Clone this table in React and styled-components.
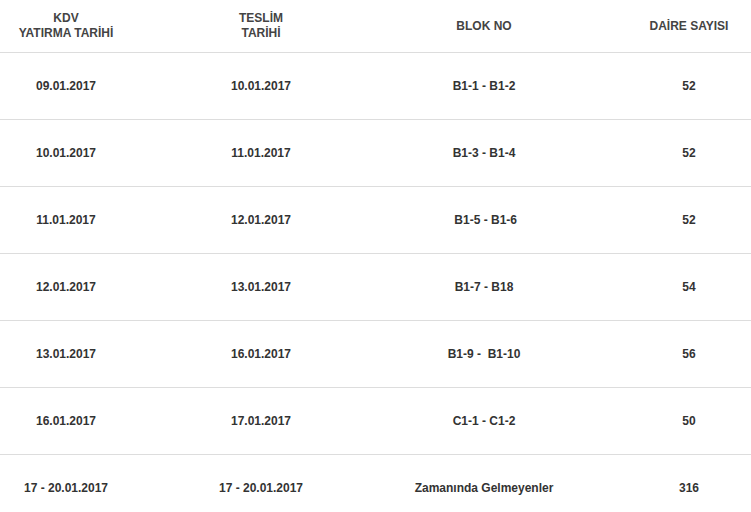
import React from "react";
import styled, { createGlobalStyle } from "styled-components";

const Global = createGlobalStyle`
  html, body { margin: 0; padding: 0; background: #fff; overflow: hidden; }
  body { font-family: "Liberation Sans", Arial, sans-serif; }
`;

const Wrap = styled.div`
  width: 751px;
  overflow: hidden;
`;

const Table = styled.div`
  width: 800px;
  display: flex;
  flex-direction: column;
`;

const Row = styled.div`
  display: grid;
  grid-template-columns: 132px 258px 188px 222px;
  height: ${(p) => (p.$head ? 52 : 66)}px;
  border-bottom: 1px solid #dddddd;
  &:last-child { border-bottom: none; }
`;

const Cell = styled.div`
  display: flex;
  align-items: center;
  justify-content: center;
  text-align: center;
  font-size: 12px;
  line-height: 15px;
  font-weight: bold;
  color: ${(p) => (p.$head ? "#444" : "#333")};
  white-space: pre;
`;

const head = [
  "KDV\nYATIRMA TARİHİ",
  "TESLİM\nTARİHİ",
  "BLOK NO",
  "DAİRE SAYISI",
];

const rows = [
  ["09.01.2017", "10.01.2017", "B1-1 - B1-2", "52"],
  ["10.01.2017", "11.01.2017", "B1-3 - B1-4", "52"],
  ["11.01.2017", "12.01.2017", " B1-5 - B1-6", "52"],
  ["12.01.2017", "13.01.2017", "B1-7 - B18", "54"],
  ["13.01.2017", "16.01.2017", "B1-9 -  B1-10", "56"],
  ["16.01.2017", "17.01.2017", "C1-1 - C1-2", "50"],
  ["17 - 20.01.2017", "17 - 20.01.2017", "Zamanında Gelmeyenler", "316"],
];

export default function App() {
  return (
    <Wrap>
      <Global />
      <Table>
        <Row $head>
          {head.map((h, i) => (
            <Cell $head key={i}>{h}</Cell>
          ))}
        </Row>
        {rows.map((r, i) => (
          <Row key={i}>
            {r.map((c, j) => (
              <Cell key={j}>{c}</Cell>
            ))}
          </Row>
        ))}
      </Table>
    </Wrap>
  );
}
